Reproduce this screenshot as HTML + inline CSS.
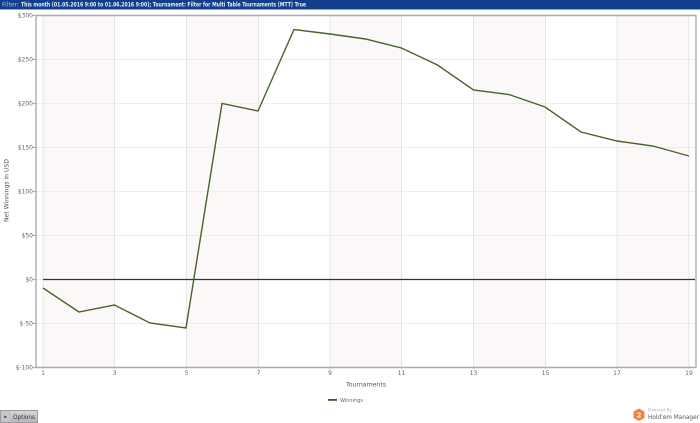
<!DOCTYPE html>
<html><head><meta charset="utf-8">
<style>
html,body{margin:0;padding:0;background:#fff;width:700px;height:423px;overflow:hidden}
svg{display:block;position:absolute;left:0;top:0}
text{font-family:"DejaVu Sans","Liberation Sans",sans-serif}
</style></head><body>
<svg width="700" height="423" viewBox="0 0 700 423" xmlns="http://www.w3.org/2000/svg">
<defs>
<linearGradient id="b" x1="0" y1="0" x2="0" y2="1"><stop offset="0" stop-color="#d6d7da"/><stop offset="1" stop-color="#b4b6ba"/></linearGradient>
<filter id="s" x="-5%" y="-5%" width="110%" height="110%"><feGaussianBlur stdDeviation="0.3"/></filter>
</defs>
<rect x="0" y="0" width="700" height="9" fill="#123f8c"/>
<rect x="0" y="9" width="700" height="1" fill="#8fa6cf"/>
<text x="2" y="6.500" font-size="6.100" fill="#aebfe0">Filter:</text>
<text x="21" y="6.500" font-size="6.100" font-weight="bold" fill="#e8eef8" textLength="285" lengthAdjust="spacingAndGlyphs">This month (01.05.2016 9:00 to 01.06.2016 9:00); Tournament: Filter for Multi Table Tournaments (MTT) True</text>
<g filter="url(#s)">
<g fill="#fdf8f8">
<rect x="43" y="16" width="71.500" height="351"/>
<rect x="186" y="16" width="72" height="351"/>
<rect x="330" y="16" width="71.500" height="351"/>
<rect x="473" y="16" width="72" height="351"/>
<rect x="617" y="16" width="72" height="351"/>
</g>
<g stroke="#efecec" stroke-width="1" fill="none">
<path d="M36 59.500H695M36 103.500H695M36 147.500H695M36 191.500H695M36 235.500H695M36 279.500H695M36 323.500H695"/>
</g>
<g stroke="#e8e5e6" stroke-width="1" fill="none">
<path d="M43 16V370M114.500 16V370M186.500 16V370M258.500 16V370M330 16V370M401.500 16V370M473.500 16V370M545.500 16V370M617 16V370M689 16V370"/>
</g>
<g stroke="#aaa" stroke-width="1"><path d="M33 15.500H36M33 59.500H36M33 103.500H36M33 147.500H36M33 191.500H36M33 235.500H36M33 279.500H36M33 323.500H36M33 367.500H36"/></g>
<path d="M36 15.500H696V367.500H36Z" fill="none" stroke="#aaa" stroke-width="1.400"/>
<path d="M43 279.500H695" stroke="#333" stroke-width="1.300" fill="none"/>
<polyline fill="none" stroke="#46642c" stroke-width="1.400" points="43,288 79,312 114.500,305 150,323 186,328 222,103.500 258,111 294,29.500 330,34 365.500,39 401.500,48 437.500,65 473.500,90 509,94.500 545,107 581,132 617,141 653,146 689,156"/>
<g font-size="6" fill="#666" text-anchor="end">
<text x="33" y="17.500">$300</text>
<text x="33" y="61.500">$250</text>
<text x="33" y="105.500">$200</text>
<text x="33" y="149.500">$150</text>
<text x="33" y="193.500">$100</text>
<text x="33" y="237.500">$50</text>
<text x="33" y="281.500">$0</text>
<text x="33" y="325.500">$-50</text>
<text x="33" y="369.500">$-100</text>
</g>
<g font-size="6" fill="#666" text-anchor="middle">
<text x="43" y="375">1</text>
<text x="114.500" y="375">3</text>
<text x="186.500" y="375">5</text>
<text x="258.500" y="375">7</text>
<text x="330" y="375">9</text>
<text x="401.500" y="375">11</text>
<text x="473.500" y="375">13</text>
<text x="545.500" y="375">15</text>
<text x="617" y="375">17</text>
<text x="689" y="375">19</text>
</g>
<text x="346" y="386.500" font-size="6.500" fill="#555" textLength="40" lengthAdjust="spacingAndGlyphs">Tournaments</text>
<text transform="translate(8.500,222) rotate(-90)" font-size="6.500" fill="#555" textLength="63" lengthAdjust="spacingAndGlyphs">Net Winnings in USD</text>
<rect x="328" y="399" width="9" height="1.800" fill="#3f5a2a"/>
<text x="340" y="402" font-size="5" fill="#666" textLength="23" lengthAdjust="spacingAndGlyphs">Winnings</text>
<rect x="0.500" y="410.500" width="37" height="12" fill="url(#b)" stroke="#9a9ca0"/>
<rect x="1" y="411" width="9.500" height="11" fill="#c4c6ca"/>
<path d="M3.500 417.500L5.200 415.500L7 417.500Z" fill="#333"/>
<text x="13" y="419" font-size="6.500" fill="#333" textLength="22" lengthAdjust="spacingAndGlyphs">Options</text>
<path d="M639 408.500L644.500 411.500V418L639 421L633.500 418V411.500Z" fill="#f0833c"/>
<text x="639" y="417.500" font-size="7" font-weight="bold" fill="#fff" text-anchor="middle">2</text>
<text x="648" y="411.500" font-size="4.500" fill="#b5b5b5" textLength="24" lengthAdjust="spacingAndGlyphs">Powered By</text>
<text x="648" y="419" font-size="6.500" fill="#555" textLength="51" lengthAdjust="spacingAndGlyphs">Hold'em Manager</text>
</g>
</svg>
</body></html>
